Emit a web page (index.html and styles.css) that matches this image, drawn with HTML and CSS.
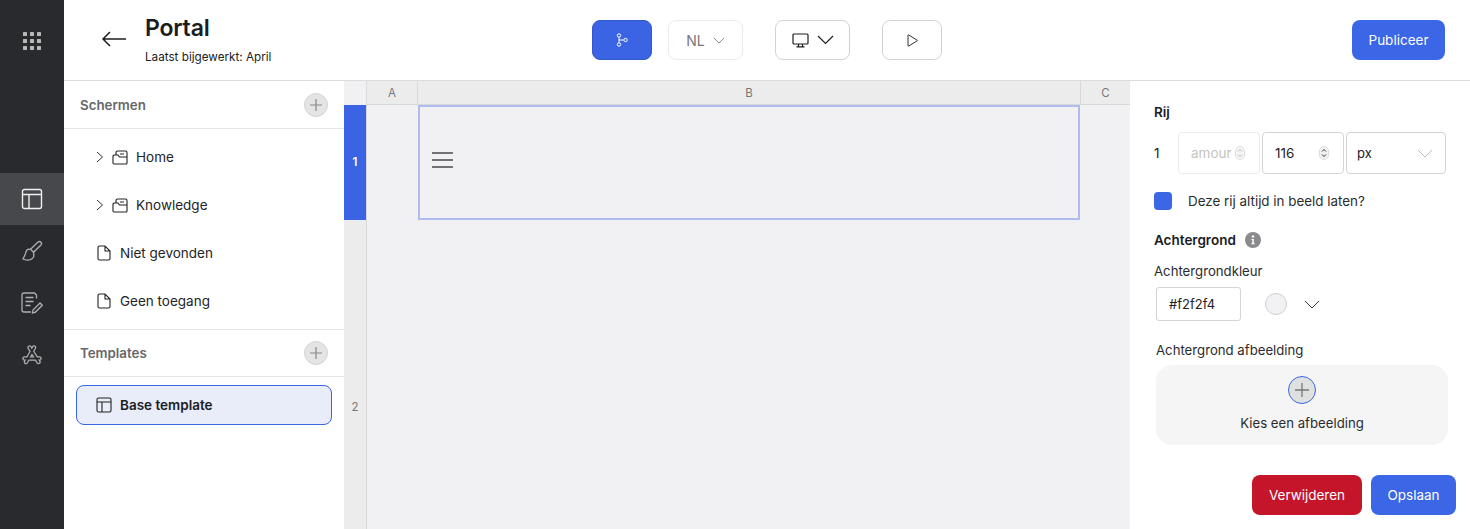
FILE: index.html
```html
<!DOCTYPE html>
<html lang="nl">
<head>
<meta charset="utf-8">
<title>Portal</title>
<link rel="stylesheet" href="styles.css">
</head>
<body>
<div class="app">
  <nav class="rail">
    <div class="rail-top">
      <svg class="ic" width="20" height="20" viewBox="0 0 20 20" fill="#b8b8b9"><rect x="1" y="1" width="4" height="4" rx=".6"/><rect x="8" y="1" width="4" height="4" rx=".6"/><rect x="15" y="1" width="4" height="4" rx=".6"/><rect x="1" y="8" width="4" height="4" rx=".6"/><rect x="8" y="8" width="4" height="4" rx=".6"/><rect x="15" y="8" width="4" height="4" rx=".6"/><rect x="1" y="15" width="4" height="4" rx=".6"/><rect x="8" y="15" width="4" height="4" rx=".6"/><rect x="15" y="15" width="4" height="4" rx=".6"/></svg>
    </div>
    <div class="rail-item active">
      <svg width="22" height="22" viewBox="0 0 22 22" fill="none" stroke="#f0f0f0" stroke-width="1.4"><rect x="1.5" y="1.5" width="19" height="19" rx="2"/><path d="M1.5 6.500h19M8 6.500v14"/></svg>
    </div>
    <div class="rail-item">
      <svg width="22" height="22" viewBox="0 0 22 22" fill="none" stroke="#b0b0b1" stroke-width="1.3"><path d="M20 2.200c-1-1-2.200-.8-3.200 0L9.500 9.300l3 3 7.200-7.100c.9-1 1.200-2.100.3-3z"/><path d="M9.500 9.300c-2.200-.4-4.100.7-4.500 2.700-.3 1.700-1.200 3.500-3 7 2.500 1.200 5.500 1.200 7.500.5 3-.5 3.900-3.400 3-7.200"/></svg>
    </div>
    <div class="rail-item">
      <svg width="22" height="22" viewBox="0 0 22 22" fill="none" stroke="#b0b0b1" stroke-width="1.3"><path d="M15.500 6.500V3l-2-2H3a2 2 0 0 0-2 2v15a2 2 0 0 0 2 2h7"/><path d="M4.500 5.500h8M4.500 9.500h8M4.500 13.500h5"/><path d="M13 20.500l-1.500.5.500-3 7-7 2.300 2.300-7 7z"/></svg>
    </div>
    <div class="rail-item">
      <svg width="22" height="20" viewBox="0 0 22 20" fill="none" stroke-linecap="round"><g stroke="#b0b0b1" stroke-width="4.400"><path d="M8.500 2.500L17.500 17M13 2.500L5 17"/><path d="M3.500 13.500h15"/></g><g stroke="#282a2e" stroke-width="2"><path d="M8.500 2.500L17.500 17M13 2.500L5 17"/><path d="M3.500 13.500h15"/></g></svg>
    </div>
  </nav>
  <div class="main">
    <header class="topbar">
      <svg class="back" width="26" height="16" viewBox="0 0 26 16" fill="none" stroke="#1d1e21" stroke-width="1.500"><path d="M25 8H2M9 1L2 8l7 7"/></svg>
      <div class="title-block">
        <h1 class="title">Portal</h1>
        <p class="subtitle">Laatst bijgewerkt: April</p>
      </div>
      <div class="tools">
        <button class="tool tool-primary">
          <svg width="12" height="14" viewBox="0 0 12 14" fill="none" stroke="#fff" stroke-width="1"><circle cx="3" cy="2.500" r="1.700"/><circle cx="3" cy="11.500" r="1.700"/><circle cx="9.500" cy="7" r="1.700"/><path d="M3 4.200v5.600M3 7h4.800"/></svg>
        </button>
        <button class="tool tool-lang"><span>NL</span><svg width="12" height="7" viewBox="0 0 14 8" fill="none" stroke="#777" stroke-width="1"><path d="M1 1l6 6 6-6"/></svg></button>
        <button class="tool tool-device">
          <svg width="17" height="15" viewBox="0 0 17 15" fill="none" stroke="#1d1e21" stroke-width="1.200"><rect x="1" y="1" width="15" height="10" rx="1"/><path d="M6.500 11v2.500M10.500 11v2.500M4.500 13.800h8"/></svg>
          <svg width="17" height="10" viewBox="0 0 17 10" fill="none" stroke="#1d1e21" stroke-width="1.200"><path d="M1 1l7.500 7.500L16 1"/></svg>
        </button>
        <button class="tool tool-play"><svg width="11" height="13" viewBox="0 0 11 13" fill="none" stroke="#333" stroke-width="1"><path d="M1 1.200v10.600a.4.400 0 0 0 .6.300l8.600-5.300a.4.400 0 0 0 0-.6L1.600.9a.4.400 0 0 0-.6.300z"/></svg></button>
      </div>
      <button class="btn btn-blue publish">Publiceer</button>
    </header>
    <div class="workspace">
      <aside class="sidebar">
        <div class="side-head"><span>Schermen</span><span class="add"><svg width="14" height="14" viewBox="0 0 14 14" stroke="#888" stroke-width="1.200"><path d="M7 1v12M1 7h12"/></svg></span></div>
        <ul class="tree">
          <li class="tree-item folder">
            <svg width="8" height="12" viewBox="0 0 8 12" fill="none" stroke="#333" stroke-width="1"><path d="M1 1l5.500 5L1 11"/></svg>
            <svg width="16" height="15" viewBox="0 0 16 15" fill="none" stroke="#222" stroke-width="1.100"><path d="M4 5V2.500A1.500 1.500 0 0 1 5.500 1h8A1.500 1.500 0 0 1 15 2.500V13a1 1 0 0 1-1 1H2a1 1 0 0 1-1-1V6a1 1 0 0 1 1-1h4l1.500 2H15M8 4h4"/></svg>
            <span>Home</span>
          </li>
          <li class="tree-item folder">
            <svg width="8" height="12" viewBox="0 0 8 12" fill="none" stroke="#333" stroke-width="1"><path d="M1 1l5.500 5L1 11"/></svg>
            <svg width="16" height="15" viewBox="0 0 16 15" fill="none" stroke="#222" stroke-width="1.100"><path d="M4 5V2.500A1.500 1.500 0 0 1 5.500 1h8A1.500 1.500 0 0 1 15 2.500V13a1 1 0 0 1-1 1H2a1 1 0 0 1-1-1V6a1 1 0 0 1 1-1h4l1.500 2H15M8 4h4"/></svg>
            <span>Knowledge</span>
          </li>
          <li class="tree-item page">
            <svg width="14" height="16" viewBox="0 0 14 16" fill="none" stroke="#222" stroke-width="1.100"><path d="M1 2.500A1.500 1.500 0 0 1 2.500 1H8l5 5v7.500a1.500 1.500 0 0 1-1.500 1.500h-9A1.500 1.500 0 0 1 1 13.500zM8 1v5h5"/></svg>
            <span>Niet gevonden</span>
          </li>
          <li class="tree-item page">
            <svg width="14" height="16" viewBox="0 0 14 16" fill="none" stroke="#222" stroke-width="1.100"><path d="M1 2.500A1.500 1.500 0 0 1 2.500 1H8l5 5v7.500a1.500 1.500 0 0 1-1.500 1.500h-9A1.500 1.500 0 0 1 1 13.500zM8 1v5h5"/></svg>
            <span>Geen toegang</span>
          </li>
        </ul>
        <div class="side-head templates"><span>Templates</span><span class="add"><svg width="14" height="14" viewBox="0 0 14 14" stroke="#888" stroke-width="1.200"><path d="M7 1v12M1 7h12"/></svg></span></div>
        <div class="template-card">
          <svg width="16" height="16" viewBox="0 0 16 16" fill="none" stroke="#222" stroke-width="1.100"><rect x="1" y="1" width="14" height="14" rx="1.500"/><path d="M1 5h14M6 5v10"/></svg>
          <span>Base template</span>
        </div>
      </aside>
      <section class="canvas">
        <div class="corner"></div>
        <div class="col-head col-a">A</div>
        <div class="col-head col-b">B</div>
        <div class="col-head col-c">C</div>
        <div class="row-head row-one">1</div>
        <div class="cell-selected">
          <svg width="22" height="16" viewBox="0 0 22 16" stroke="#4a4a4c" stroke-width="1.500"><path d="M0 1h21M0 8h21M0 15h21"/></svg>
        </div>
        <div class="row-head row-two">2</div>
        <div class="cell-rest"></div>
      </section>
      <aside class="panel">
        <h2 class="h-rij">Rij</h2>
        <div class="row-fields">
          <span class="row-num">1</span>
          <div class="field f-amount"><span>amour</span><svg class="spin" width="10" height="14" viewBox="0 0 10 14" fill="none" stroke="#bbb" stroke-width="1"><rect x=".5" y=".5" width="9" height="13" rx="4.500" stroke="#ddd" fill="#f5f5f5"/><path d="M3 5.500L5 3.500l2 2M3 8.500l2 2 2-2"/></svg></div>
          <div class="field f-size"><span>116</span><svg class="spin" width="10" height="14" viewBox="0 0 10 14" fill="none" stroke="#333" stroke-width="1"><rect x=".5" y=".5" width="9" height="13" rx="4.500" stroke="#ddd" fill="#f1f1f1"/><path d="M3 5.500L5 3.500l2 2M3 8.500l2 2 2-2"/></svg></div>
          <div class="field f-unit"><span>px</span><svg width="16" height="9" viewBox="0 0 16 9" fill="none" stroke="#bbb" stroke-width="1"><path d="M1 1l7 7 7-7"/></svg></div>
        </div>
        <label class="check-row"><span class="check"></span><span>Deze rij altijd in beeld laten?</span></label>
        <div class="bg-head"><h2>Achtergrond</h2><svg width="16" height="16" viewBox="0 0 16 16"><circle cx="8" cy="8" r="8" fill="#8a8a8c"/><circle cx="8" cy="4.500" r="1.200" fill="#fff"/><path d="M6.500 7h2.300v4.300h1v1h-3.500v-1h1V8h-.8z" fill="#fff"/></svg></div>
        <div class="label-kleur">Achtergrondkleur</div>
        <div class="color-row">
          <div class="color-input">#f2f2f4</div>
          <span class="swatch"></span>
          <svg width="16" height="9" viewBox="0 0 16 9" fill="none" stroke="#444" stroke-width="1"><path d="M1 1l7 7 7-7"/></svg>
        </div>
        <div class="label-img">Achtergrond afbeelding</div>
        <div class="picker">
          <span class="picker-add"><svg width="16" height="16" viewBox="0 0 16 16" stroke="#777" stroke-width="1.300"><path d="M8 1v14M1 8h14"/></svg></span>
          <span class="picker-text">Kies een afbeelding</span>
        </div>
        <div class="actions">
          <button class="btn btn-red">Verwijderen</button>
          <button class="btn btn-blue">Opslaan</button>
        </div>
      </aside>
    </div>
  </div>
</div>
</body>
</html>
```
FILE: styles.css
```css
* { box-sizing: border-box; }
html, body { margin: 0; height: 100%; overflow: hidden; }
body { font-family: Inter, "Noto Sans", "Liberation Sans", sans-serif; color: #222327; background: #fff; font-size: 13px; }
h1, h2, p, ul { margin: 0; padding: 0; }
ul { list-style: none; }
button { font-family: inherit; cursor: pointer; }
svg { display: block; flex: none; }

.app { display: flex; height: 529px; }

.rail { width: 64px; flex: none; background: #282a2e; display: flex; flex-direction: column; align-items: stretch; }
.rail-top { height: 173px; padding-top: 31px; display: flex; justify-content: center; }
.rail-item { height: 52px; display: flex; align-items: center; justify-content: center; }
.rail-item.active { background: #47484c; }

.main { flex: 1; min-width: 0; display: flex; flex-direction: column; }

.topbar { height: 81px; flex: none; border-bottom: 1px solid #dcdcdc; display: flex; align-items: flex-start; position: relative; padding-left: 37px; }
.back { margin-top: 31px; }
.title-block { margin-left: 18px; padding-top: 14px; width: 447px; }
.title { font-size: 23px; line-height: 28px; font-weight: 600; color: #1b1c1f; letter-spacing: -.2px; }
.subtitle { margin-top: 8px; font-size: 11.700px; line-height: 14px; color: #222; white-space: nowrap; }

.tools { display: flex; margin-top: 20px; }
.tool { height: 40px; border-radius: 8px; background: #fff; border: 1px solid #d2d2d2; display: flex; align-items: center; justify-content: center; padding: 0; }
.tool-primary { width: 60px; background: #3b64e4; border-color: #3659c9; }
.tool-lang { width: 75px; margin-left: 16px; border-color: #ebebeb; gap: 8px; color: #777; font-size: 14px; }
.tool-device { width: 75px; margin-left: 32px; gap: 8px; }
.tool-play { width: 60px; margin-left: 32px; }

.btn { height: 40px; border: 0; border-radius: 8px; color: #fff; font-size: 13.500px; padding: 0; }
.btn-blue { background: #3b66e6; }
.btn-red { background: #c5152b; }
.publish { width: 93px; margin-top: 20px; margin-left: auto; margin-right: 25px; }

.workspace { flex: 1; min-height: 0; display: flex; }

.sidebar { width: 280px; flex: none; background: #fff; }
.side-head { height: 48px; display: flex; align-items: center; justify-content: space-between; padding: 0 16px; border-bottom: 1px solid #e5e5e5; font-weight: 600; font-size: 13.300px; color: #66676a; }
.side-head.templates { border-top: 1px solid #e5e5e5; margin-top: 4px; }
.add { width: 24px; height: 24px; border-radius: 50%; background: #e4e4e4; border: 1px solid #d4d4d4; display: flex; align-items: center; justify-content: center; }

.tree { padding-top: 4px; }
.tree-item { height: 48px; display: flex; align-items: center; font-size: 13.500px; color: #232428; }
.tree-item.folder { padding-left: 32px; gap: 8px; }
.tree-item.page { padding-left: 33px; gap: 9px; }

.template-card { margin: 8px 12px 0; height: 40px; width: 256px; border: 1px solid #3b66e6; border-radius: 8px; background: #e8edf9; display: flex; align-items: center; padding-left: 19px; gap: 8px; font-weight: 600; font-size: 13.500px; color: #1b1c1f; }

.canvas { width: 786px; height: 448px; flex: none; overflow: hidden; background: #f1f1f3; display: grid; grid-template-columns: 23px 51px 1fr 49px; grid-template-rows: 24px 115px 374px; }
.corner { background: #f1f1f3; border-right: 1px solid #dadada; }
.col-head { background: #ececec; border-bottom: 1px solid #d8d8d8; border-right: 1px solid #d8d8d8; display: flex; align-items: center; justify-content: center; font-size: 11.500px; color: #777; }
.col-c { border-right: 0; }
.row-head { display: flex; align-items: center; justify-content: center; font-size: 11.500px; color: #fff; border-right: 1px solid #d8d8d8; }
.row-one { background: #3b64e4; font-weight: 600; padding-bottom: 2px; }
.row-two { color: #777; background: #ececec; }
.cell-selected { grid-column: 2 / 5; margin: 0 50px 0 51px; border: 2px solid #aebdee; display: flex; align-items: center; padding: 0 0 6px 12px; }
.cell-rest { grid-column: 2 / 5; }

.panel { flex: 1; min-width: 0; background: #fff; padding: 23px 24px 0; position: relative; }
.panel h2 { font-size: 13.500px; font-weight: 600; color: #1b1c1f; }
.h-rij { line-height: 16px; }
.row-fields { display: flex; align-items: center; margin-top: 12px; font-size: 13.500px; }
.row-num { width: 24px; font-weight: 400; }
.field { height: 42px; border: 1px solid #d4d4d4; border-radius: 4px; display: flex; align-items: center; justify-content: space-between; margin-right: 2px; }
.f-amount { width: 82px; border-color: #ebebeb; color: #c4c4c4; padding: 0 14px 0 12px; }
.f-size { width: 82px; padding: 0 14px 0 12px; }
.f-unit { width: 100px; padding: 0 12px 0 10px; margin-right: 0; font-size: 13px; }
.check-row { display: flex; align-items: center; gap: 16px; margin-top: 18px; font-size: 13.400px; color: #2a2b2e; height: 18px; }
.check { width: 18px; height: 18px; border-radius: 4px; background: #3b66e6; }
.bg-head { display: flex; align-items: center; gap: 9px; margin-top: 21px; height: 18px; }
.label-kleur { margin-top: 13px; line-height: 18px; font-size: 13.200px; color: #2a2b2e; }
.color-row { display: flex; align-items: center; margin: 7px 0 0 2px; }
.color-input { width: 85px; height: 34px; border: 1px solid #d4d4d4; border-radius: 3px; padding-left: 12px; display: flex; align-items: center; font-size: 13px; }
.swatch { width: 22px; height: 22px; border-radius: 50%; background: #f2f2f4; border: 1px solid #cfcfcf; margin: 0 17px 0 24px; }
.label-img { margin: 20px 0 0 2px; line-height: 18px; font-size: 13.200px; color: #2a2b2e; }
.picker { margin: 6px 0 0 2px; width: 292px; height: 80px; border-radius: 16px; background: #f5f5f5; display: flex; flex-direction: column; align-items: center; padding-top: 11px; }
.picker-add { width: 28px; height: 28px; border-radius: 50%; background: #dfe0e0; border: 1px solid #3b66e6; display: flex; align-items: center; justify-content: center; }
.picker-text { margin-top: 10px; line-height: 18px; font-size: 13.200px; color: #2a2b2e; }
.actions { display: flex; justify-content: flex-end; gap: 9px; margin: 30px -10px 0 0; }
.actions .btn-red { width: 110px; }
.actions .btn-blue { width: 85px; }
```
